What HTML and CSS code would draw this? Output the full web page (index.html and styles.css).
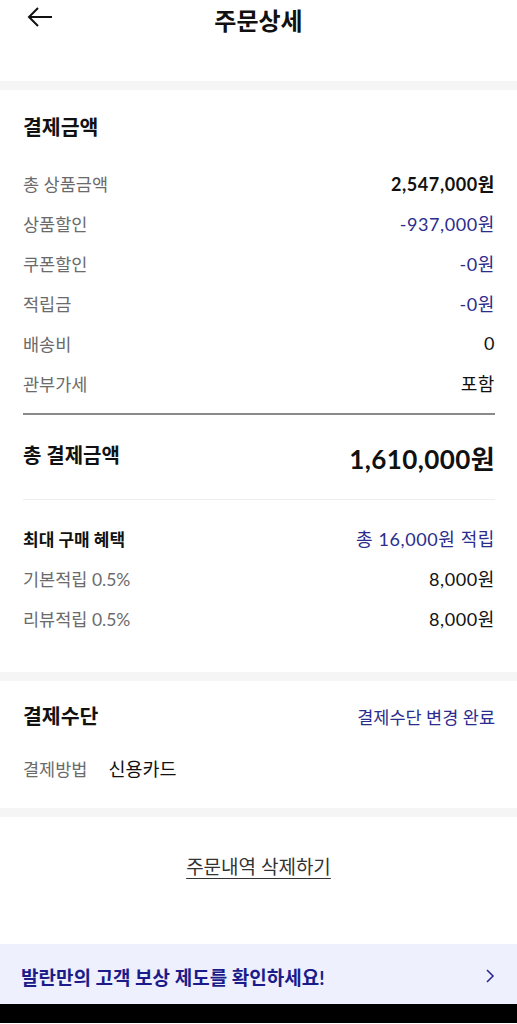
FILE: index.html
```html
<!DOCTYPE html>
<html lang="ko">
<head>
	<meta charset="UTF-8">
	<meta name="viewport" content="width=device-width, initial-scale=1">
	<title>주문상세</title>
	<link rel="stylesheet" href="styles.css">
</head>
<body>
	<header class="header">
		<button class="back-button">
			<svg width="26" height="22" viewBox="0 0 26 22"><path d="M2 11H25M11 2L2 11L11 20" fill="none" stroke="#111" stroke-width="2"/></svg>
		</button>
		<p class="title">주문상세</p>
	</header>

	<div class="band"></div>

	<section class="section pay-section">
		<p class="section-title">결제금액</p>
		<div class="rows">
			<div class="row"><span class="label">총 상품금액</span><span class="value strong">2,547,000원</span></div>
			<div class="row"><span class="label">상품할인</span><span class="value blue">-937,000원</span></div>
			<div class="row"><span class="label">쿠폰할인</span><span class="value blue">-0원</span></div>
			<div class="row"><span class="label">적립금</span><span class="value blue">-0원</span></div>
			<div class="row"><span class="label">배송비</span><span class="value">0</span></div>
			<div class="row"><span class="label">관부가세</span><span class="value">포함</span></div>
		</div>
		<div class="total-row">
			<span class="total-label">총 결제금액</span>
			<span class="total-value">1,610,000원</span>
		</div>
		<div class="benefit">
			<div class="row"><span class="benefit-title">최대 구매 혜택</span><span class="value blue">총 16,000원 적립</span></div>
			<div class="row"><span class="label">기본적립 0.5%</span><span class="value">8,000원</span></div>
			<div class="row"><span class="label">리뷰적립 0.5%</span><span class="value">8,000원</span></div>
		</div>
	</section>

	<div class="band"></div>

	<section class="section method-section">
		<div class="row">
			<span class="section-title">결제수단</span>
			<span class="value blue">결제수단 변경 완료</span>
		</div>
		<div class="method">
			<span class="label">결제방법</span>
			<span class="method-value">신용카드</span>
		</div>
	</section>

	<div class="band"></div>

	<div class="delete-area">
		<a class="delete-link">주문내역 삭제하기</a>
	</div>

	<div class="banner">
		<span>발란만의 고객 보상 제도를 확인하세요!</span>
		<svg width="12" height="16" viewBox="0 0 12 16"><path d="M3 2L9 8L3 14" fill="none" stroke="#2b2d8e" stroke-width="1.6"/></svg>
	</div>
	<div class="nav-bar"></div>
</body>
</html>
```
FILE: styles.css
```css
body {
	margin: 0;
	background-color: white;
	font-family: Lato, "Noto Sans CJK KR", sans-serif;
	font-size: 17.5px;
	color: #111;
}

p {
	margin: 0;
}

.header {
	height: 38px;
	display: flex;
	align-items: center;
	justify-content: center;
	position: relative;
	margin-bottom: 43px;
}

.back-button {
	position: absolute;
	left: 27px;
	top: 6px;
	border: none;
	background: transparent;
	padding: 0;
	display: flex;
}

.title {
	font-size: 24px;
	font-weight: bold;
}

.band {
	height: 9px;
	background-color: #f5f5f5;
}

.section {
	padding: 0 22px 0 23px;
}

.section-title {
	font-size: 20.5px;
	font-weight: bold;
	line-height: 30px;
}

.pay-section {
	padding-top: 22px;
	padding-bottom: 34px;
}

.rows {
	margin-top: 21px;
	padding-bottom: 10px;
	border-bottom: 2px solid #8a8a8a;
}

.row {
	height: 40px;
	display: flex;
	align-items: center;
	justify-content: space-between;
}

.label {
	color: #6b6b6b;
}

.value {
	color: #111;
	font-size: 18px;
	letter-spacing: 0.6px;
}

.strong {
	font-weight: bold;
}

.blue {
	color: #2b2d8e;
}

.total-row {
	height: 84px;
	display: flex;
	align-items: center;
	justify-content: space-between;
	border-bottom: 1px solid #eeeeee;
}

.total-label {
	font-size: 20px;
	font-weight: bold;
	margin-top: -6px;
}

.total-value {
	font-size: 26px;
	font-weight: bold;
	letter-spacing: 0.4px;
}

.benefit {
	margin-top: 18px;
}

.benefit-title {
	font-size: 17px;
	font-weight: bold;
}

.method-section {
	padding-top: 15px;
	padding-bottom: 20px;
}

.method-section .value {
	font-size: 17.5px;
	letter-spacing: 0;
}

.method {
	height: 40px;
	margin-top: 12px;
	display: flex;
	align-items: center;
	gap: 21px;
}

.method-value {
	color: #111;
	font-size: 18.5px;
}

.delete-area {
	height: 127px;
	display: flex;
	justify-content: center;
	padding-top: 38px;
	box-sizing: border-box;
}

.delete-link {
	line-height: 24px;
	height: 24px;
	font-size: 19px;
	color: #333;
	text-decoration: underline;
	text-underline-offset: 4px;
}

.banner {
	height: 60px;
	background-color: #eef0fd;
	display: flex;
	align-items: center;
	justify-content: space-between;
	padding: 4px 21px 0 21px;
	box-sizing: border-box;
	color: #1b1c8a;
	font-size: 19px;
	font-weight: bold;
}

.nav-bar {
	height: 19px;
	background-color: black;
}
```
